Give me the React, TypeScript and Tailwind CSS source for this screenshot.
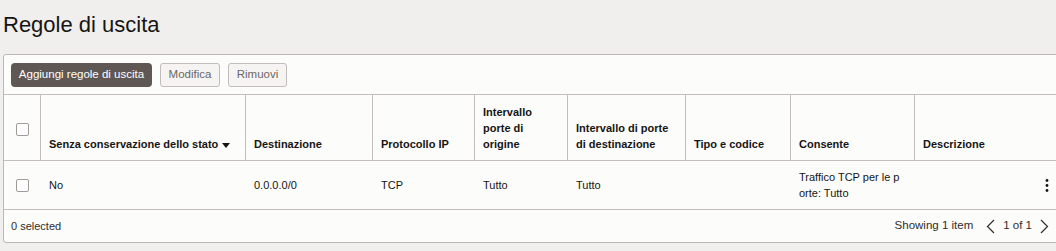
const font = { fontFamily: '"Liberation Sans", Arial, sans-serif' };

function Checkbox() {
    return <span className="block w-[13px] h-[13px] rounded-[2px] border border-[#a09b96] bg-white" />;
}

function SortDown() {
    return (
        <svg width="8" height="5" viewBox="0 0 8 5" className="ml-[4px] inline-block align-middle">
            <path d="M0 0h8L4 5z" fill="#161513" />
        </svg>
    );
}

function Chevron({ dir }: { dir: "left" | "right" }) {
    return (
        <svg width="9" height="15" viewBox="0 0 9 15">
            <path d={dir === "left" ? "M8 1L1.5 7.5L8 14" : "M1 1L7.5 7.5L1 14"} fill="none" stroke="#312d2a" strokeWidth="1.2" />
        </svg>
    );
}

const columns = [
    { key: "stato", label: "Senza conservazione dello stato", sort: true },
    { key: "dest", label: "Destinazione" },
    { key: "proto", label: "Protocollo IP" },
    { key: "orig", label: "Intervallo porte di origine" },
    { key: "dport", label: "Intervallo di porte di destinazione" },
    { key: "tipo", label: "Tipo e codice" },
    { key: "cons", label: "Consente" },
    { key: "desc", label: "Descrizione" },
];

const grid = "grid grid-cols-[37px_205px_127px_102px_93px_118px_105px_124px_1fr]";

export default function App() {
    return (
        <div className="w-[1056px] h-[251px] overflow-hidden bg-[#f1efed] text-[#161513]" style={font}>
            <h1 className="mt-[14px] ml-[3px] text-[22px] leading-[22px] font-normal">Regole di uscita</h1>
            <div className="mt-[18px] ml-[3px] w-[1058px] border border-[#bcb7b2] rounded-[3px] bg-[#fcfcfb]">
                <div className="flex items-center gap-2 pl-[7px] pt-[8px] pb-[7px]">
                    <button className="h-[24px] w-[141px] rounded-[4px] bg-[#5f5753] text-white text-[11.5px]">Aggiungi regole di uscita</button>
                    <button className="h-[24px] w-[60px] rounded-[3px] border border-[#c2bdb8] bg-[#f5f4f2] text-[#6d6763] text-[11.5px]">Modifica</button>
                    <button className="h-[24px] w-[59px] rounded-[3px] border border-[#c2bdb8] bg-[#f5f4f2] text-[#6d6763] text-[11.5px]">Rimuovi</button>
                </div>

                <div className={`${grid} h-[67px] border-t border-b border-[#c4bfba] text-[11px] leading-[16px] font-bold`}>
                    <div className="border-r border-[#c4bfba] pl-[12px] pt-[28px]">
                        <Checkbox />
                    </div>
                    {columns.map((c, i) => (
                        <div
                            key={c.key}
                            className={`flex items-end px-[8px] pb-[8px] ${i < columns.length - 1 ? "border-r border-[#c4bfba]" : ""}`}
                        >
                            <span>
                                {c.label}
                                {c.sort && <SortDown />}
                            </span>
                        </div>
                    ))}
                </div>

                <div className={`${grid} h-[49px] border-b border-[#c4bfba] text-[11px] leading-[16px] items-center`}>
                    <div className="pl-[12px]">
                        <Checkbox />
                    </div>
                    <div className="pl-[8px]">No</div>
                    <div className="pl-[8px]">0.0.0.0/0</div>
                    <div className="pl-[8px]">TCP</div>
                    <div className="pl-[8px]">Tutto</div>
                    <div className="pl-[8px]">Tutto</div>
                    <div className="pl-[8px]"></div>
                    <div className="pl-[8px]">
                        Traffico TCP per le p
                        <br />
                        orte: Tutto
                    </div>
                    <div className="flex justify-end pr-[11px]">
                        <svg width="4" height="13" viewBox="0 0 4 13">
                            <circle cx="2" cy="1.5" r="1.4" fill="#161513" />
                            <circle cx="2" cy="6.5" r="1.4" fill="#161513" />
                            <circle cx="2" cy="11.5" r="1.4" fill="#161513" />
                        </svg>
                    </div>
                </div>

                <div className="flex items-center justify-between h-[32px] pl-[7px] pr-[11px] text-[11px] text-[#312d2a]">
                    <span>0 selected</span>
                    <div className="flex items-center">
                        <span className="text-[11.5px]">Showing 1 item</span>
                        <span className="ml-[13px]"><Chevron dir="left" /></span>
                        <span className="mx-[8px] text-[11.5px]">1 of 1</span>
                        <Chevron dir="right" />
                    </div>
                </div>
            </div>
        </div>
    );
}
